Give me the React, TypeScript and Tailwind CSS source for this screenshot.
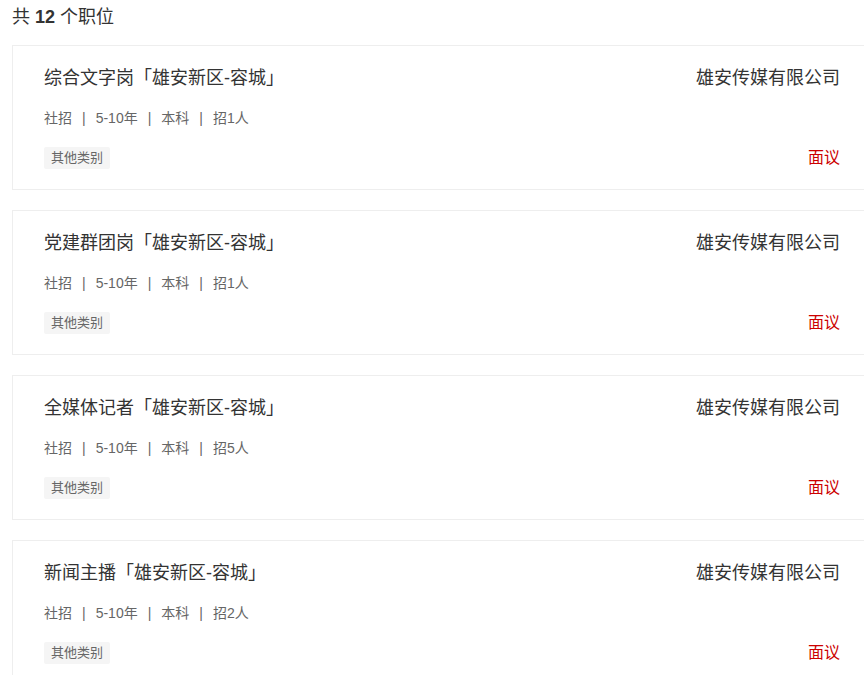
import React from "react";

const jobs = [
  { title: "综合文字岗「雄安新区-容城」", count: "招1人" },
  { title: "党建群团岗「雄安新区-容城」", count: "招1人" },
  { title: "全媒体记者「雄安新区-容城」", count: "招5人" },
  { title: "新闻主播「雄安新区-容城」", count: "招2人" },
];

function Sep() {
  return <span className="mx-[10px] text-[#666]">|</span>;
}

export default function App() {
  return (
    <div
      className="w-[864px] h-[675px] overflow-hidden bg-white text-[#333]"
      style={{ fontFamily: '"Liberation Sans", "Noto Sans CJK SC", sans-serif' }}
    >
      <div className="pl-[12px] pt-[4px] h-[45px]">
        <div className="text-[18px] leading-[26px] text-[#333]">
          共 <span className="font-bold">12</span> 个职位
        </div>
      </div>
      <div className="flex flex-col gap-[20px] pl-[12px]">
        {jobs.map((j, i) => (
          <div
            key={i}
            className="w-[860px] shrink-0 border border-[#eeeeee] bg-white px-[31px] pt-[19px] pb-[20px] flex justify-between"
          >
            <div className="flex flex-col">
              <div className="text-[18px] leading-[26px] text-[#333]">{j.title}</div>
              <div className="mt-[17px] text-[14px] leading-[20px] text-[#666] flex items-center">
                <span>社招</span>
                <Sep />
                <span>5-10年</span>
                <Sep />
                <span>本科</span>
                <Sep />
                <span>{j.count}</span>
              </div>
              <div className="mt-[19px] flex">
                <span className="bg-[#f5f5f5] text-[#666] text-[13px] leading-[22px] px-[7px] rounded-[2px]">
                  其他类别
                </span>
              </div>
            </div>
            <div className="flex flex-col justify-between items-end">
              <div className="text-[18px] leading-[26px] text-[#333]">雄安传媒有限公司</div>
              <div className="text-[16px] leading-[22px] text-[#cc0000]">面议</div>
            </div>
          </div>
        ))}
      </div>
    </div>
  );
}
